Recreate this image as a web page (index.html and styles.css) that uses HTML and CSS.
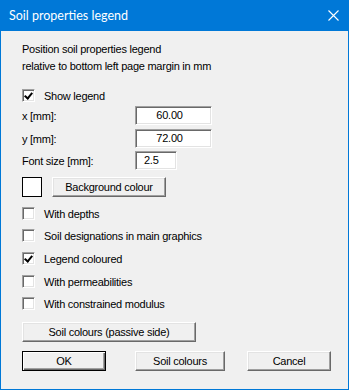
FILE: index.html
```html
<!DOCTYPE html>
<html>
  <head>
    <link rel="stylesheet" href="styles.css">
  </head>
  <body>
    <div class='dialog'>
      <div class='titlebar'>
        <span class='title'>Soil properties legend</span>
        <svg class='close' width='11' height='11' viewBox='0 0 11 11'>
          <path d='M0.5 0.5 L10.5 10.5 M10.5 0.5 L0.5 10.5' stroke='#fff' stroke-width='1.1' fill='none'/>
        </svg>
      </div>
      <div class='body'>
        <div class='intro'>
          <div>Position soil properties legend</div>
          <div>relative to bottom left page margin in mm</div>
        </div>

        <label class='check show'><span class='box on'></span>Show legend</label>

        <div class='field first'><span class='lbl'>x [mm]:</span><span class='edit'>60.00</span></div>
        <div class='field'><span class='lbl'>y [mm]:</span><span class='edit'>72.00</span></div>
        <div class='field third'><span class='lbl'>Font size [mm]:</span><span class='edit small'>2.5</span></div>

        <div class='colour-row'>
          <span class='swatch'></span>
          <span class='btn bg'>Background colour</span>
        </div>

        <div class='checks'>
          <label class='check'><span class='box'></span>With depths</label>
          <label class='check'><span class='box'></span>Soil designations in main graphics</label>
          <label class='check'><span class='box on'></span>Legend coloured</label>
          <label class='check'><span class='box'></span>With permeabilities</label>
          <label class='check'><span class='box'></span>With constrained modulus</label>
        </div>

        <span class='btn passive'>Soil colours (passive side)</span>

        <div class='actions'>
          <span class='btn default ok'>OK</span>
          <span class='btn colours'>Soil colours</span>
          <span class='btn cancel'>Cancel</span>
        </div>
      </div>
    </div>
  </body>
</html>
```

FILE: styles.css
```css
html, body {
  margin: 0;
  padding: 0;
  background: #f0f0f0;
}
.dialog {
  width: 349px;
  height: 390px;
  box-sizing: border-box;
  border: 1px solid #0078d7;
  border-top: none;
  background: #f0f0f0;
  font-family: "Liberation Sans", Arial, sans-serif;
  font-size: 11px;
  letter-spacing: -0.25px;
  color: #000;
  overflow: hidden;
}
.titlebar {
  height: 31px;
  margin: 0 -1px;
  background: #0078d7;
  display: flex;
  align-items: center;
  padding: 0 10px 0 9px;
}
.title {
  flex: 1;
  color: #fff;
  font-family: Lato, "Noto Sans", sans-serif;
  font-size: 12.5px;
  letter-spacing: 0;
  margin-top: -1px;
}
.close {
  margin-top: -1px;
}
.body {
  padding: 10px 0 0 21px;
}
.intro div {
  height: 17px;
  line-height: 17px;
}

/* checkboxes */
.check {
  display: flex;
  align-items: center;
  height: 13px;
}
.check.show {
  margin-top: 14px;
}
.box {
  width: 13px;
  height: 13px;
  box-sizing: border-box;
  border: 1px solid;
  border-color: #a0a0a0 #fff #fff #a0a0a0;
  box-shadow: inset 1px 1px #696969, inset -1px -1px #e3e3e3;
  background: #fff;
  margin-right: 9px;
  position: relative;
}
.box.on::after {
  content: '';
  position: absolute;
  left: 3px;
  top: 1px;
  width: 3px;
  height: 6px;
  border: solid #000;
  border-width: 0 2px 2px 0;
  transform: rotate(40deg);
}
.checks {
  margin-top: 10px;
}
.checks .check + .check {
  margin-top: 10px;
}
.checks .check:nth-child(2),
.checks .check:nth-child(5) {
  margin-top: 9px;
}

/* edit fields */
.field {
  display: flex;
  align-items: center;
  height: 19px;
  margin-top: 4px;
}
.field.third {
  margin-top: 3px;
}
.lbl {
  width: 113px;
}
.edit {
  width: 77px;
  height: 19px;
  box-sizing: border-box;
  border: 1px solid;
  border-color: #a0a0a0 #fff #fff #a0a0a0;
  box-shadow: inset 1px 1px #696969, inset -1px -1px #e3e3e3;
  background: #fff;
  text-align: center;
  line-height: 17px;
  padding: 0 8px 0 0;
}
.edit.small {
  width: 42px;
  text-align: left;
  padding-left: 8px;
}

/* buttons */
.btn {
  display: flex;
  align-items: center;
  justify-content: center;
  height: 20px;
  box-sizing: border-box;
  border: 1px solid;
  border-color: #fff #696969 #696969 #fff;
  box-shadow: inset -1px -1px #a0a0a0, inset 1px 1px #e3e3e3;
  background: #f0f0f0;
}
.btn.default {
  border-color: #000;
  box-shadow: inset 1px 1px #fff, inset -1px -1px #696969, inset -2px -2px #a0a0a0;
}
.colour-row {
  display: flex;
  align-items: flex-start;
  margin-top: 7px;
}
.swatch {
  width: 20px;
  height: 20px;
  box-sizing: border-box;
  border: 1px solid #000;
  background: #fff;
  margin-right: 10px;
}
.btn.bg {
  width: 114px;
}
.btn.passive {
  width: 174px;
  margin-top: 12px;
}
.actions {
  display: flex;
  margin-top: 9px;
}
.ok {
  width: 84px;
}
.colours {
  width: 90px;
  margin-left: 29px;
}
.cancel {
  width: 84px;
  margin-left: 22px;
}
```
